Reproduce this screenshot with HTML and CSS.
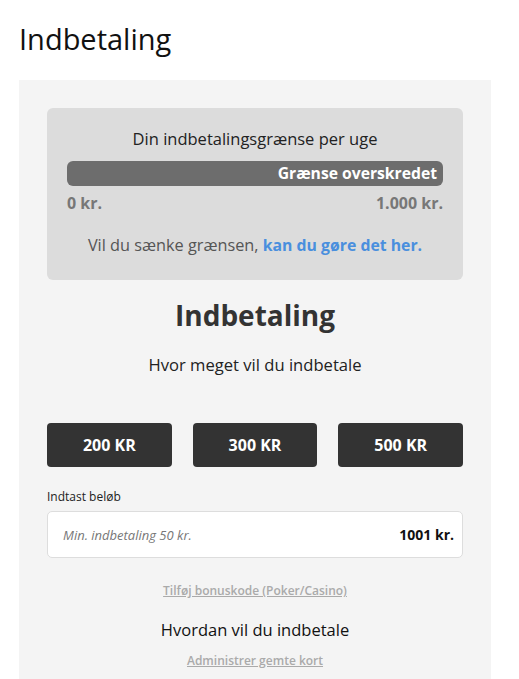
FILE: index.html
```html
<!DOCTYPE html>
<html lang="da">
<head>
    <meta charset="UTF-8">
    <meta name="viewport" content="width=device-width, initial-scale=1.0">
    <title>Indbetaling</title>
    <link rel="stylesheet" href="styles.css">
</head>
<body>
    <h1 class="page-title">Indbetaling</h1>
    <div class="panel">
        <div class="limit-box">
            <p class="limit-title">Din indbetalingsgrænse per uge</p>
            <div class="limit-bar">Grænse overskredet</div>
            <div class="limit-range">
                <span>0 kr.</span>
                <span>1.000 kr.</span>
            </div>
            <p class="limit-note">Vil du sænke grænsen, <a href="#">kan du gøre det her.</a></p>
        </div>

        <h2 class="deposit-title">Indbetaling</h2>
        <p class="deposit-sub">Hvor meget vil du indbetale</p>

        <div class="amount-buttons">
            <button class="amount-button">200 KR</button>
            <button class="amount-button">300 KR</button>
            <button class="amount-button">500 KR</button>
        </div>

        <label class="amount-label" for="amount">Indtast beløb</label>
        <div class="amount-field">
            <input id="amount" type="text" placeholder="Min. indbetaling 50 kr.">
            <span class="amount-value">1001 kr.</span>
        </div>

        <a class="small-link" href="#">Tilføj bonuskode (Poker/Casino)</a>
        <p class="method-title">Hvordan vil du indbetale</p>
        <a class="small-link" href="#">Administrer gemte kort</a>
    </div>
</body>
</html>
```

FILE: styles.css
```css
body {
    margin: 0;
    padding: 0 19px;
    font-family: "Open Sans", Arial, sans-serif;
    color: #222;
    background: #fff;
}
.page-title {
    margin: 0;
    padding-top: 21px;
    height: 80px;
    box-sizing: border-box;
    font-size: 29px;
    font-weight: 400;
    line-height: 36px;
    color: #111;
}
.panel {
    width: 472px;
    box-sizing: border-box;
    background: #f4f4f4;
    padding: 28px 28px 40px;
    display: flex;
    flex-direction: column;
    align-items: center;
}
.limit-box {
    width: 100%;
    box-sizing: border-box;
    background: #dcdcdc;
    border-radius: 6px;
    padding: 20px 20px 24px;
}
.limit-title {
    margin: 0;
    text-align: center;
    font-size: 16.5px;
    line-height: 22px;
    color: #222;
}
.limit-bar {
    margin-top: 11px;
    height: 25px;
    line-height: 25px;
    border-radius: 6px;
    background: #6d6d6d;
    color: #fff;
    font-weight: 700;
    font-size: 15.7px;
    text-align: right;
    padding-right: 6px;
}
.limit-range {
    display: flex;
    justify-content: space-between;
    margin-top: 6px;
    font-size: 16px;
    line-height: 22px;
    font-weight: 700;
    color: #777;
}
.limit-note {
    margin: 20px 0 0;
    text-align: center;
    font-size: 16.3px;
    line-height: 22px;
    color: #555;
}
.limit-note a {
    color: #4a8fde;
    font-weight: 700;
    font-size: 15.8px;
    text-decoration: none;
}
.deposit-title {
    margin: 17px 0 0;
    font-size: 28px;
    line-height: 36px;
    font-weight: 700;
    color: #333;
}
.deposit-sub {
    margin: 21px 0 0;
    font-size: 16.6px;
    line-height: 22px;
    color: #222;
}
.amount-buttons {
    width: 100%;
    display: flex;
    gap: 21px;
    margin-top: 47px;
}
.amount-button {
    flex: 1;
    height: 44px;
    border: none;
    border-radius: 4px;
    background: #333;
    color: #fff;
    font-family: inherit;
    font-size: 16px;
    font-weight: 700;
    cursor: pointer;
}
.amount-label {
    align-self: flex-start;
    margin-top: 21px;
    font-size: 12px;
    line-height: 18px;
    color: #222;
}
.amount-field {
    width: 100%;
    box-sizing: border-box;
    margin-top: 5px;
    height: 47px;
    display: flex;
    align-items: center;
    background: #fff;
    border: 1px solid #ddd;
    border-radius: 5px;
    padding: 0 8px 0 15px;
}
.amount-field input {
    flex: 1;
    border: none;
    outline: none;
    background: transparent;
    font-family: inherit;
    font-size: 13px;
    padding: 0;
}
.amount-field input::placeholder {
    color: #777;
    font-style: italic;
}
.amount-value {
    font-size: 14px;
    font-weight: 700;
    color: #111;
}
.small-link {
    margin-top: 24px;
    font-size: 12px;
    line-height: 18px;
    font-weight: 600;
    color: #aaa;
    text-decoration: underline;
}
.method-title {
    margin: 18px 0 0;
    font-size: 16.5px;
    line-height: 24px;
    color: #111;
}
.panel .method-title + .small-link {
    margin-top: 10px;
}
```
